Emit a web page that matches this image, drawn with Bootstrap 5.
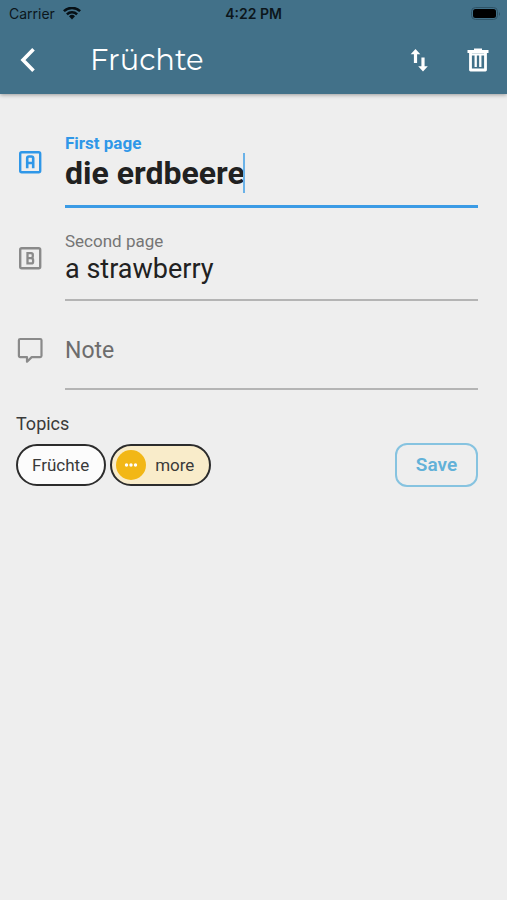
<!DOCTYPE html>
<html lang="en">
<head>
<meta charset="utf-8">
<meta name="viewport" content="width=device-width, initial-scale=1">
<title>Früchte</title>
<link href="https://cdn.jsdelivr.net/npm/bootstrap@5.3.0/dist/css/bootstrap.min.css" rel="stylesheet">
<style>
body { background: #eee; color: #212121; font-family: Roboto, "Liberation Sans", sans-serif; }
.app-top { background: #427189; box-shadow: 0 1px 4px rgba(0,0,0,.35); }
.status { height: 28px; padding: 0 6px 0 9px; font: 400 14px/28px Inter, sans-serif; color: #0c161b; }
.status .time { font-weight: 600; }
.toolbar { height: 66px; padding: 0 16px 2px 15px; }
.toolbar h1 { font: 400 29px/36px Montserrat, Inter, sans-serif; margin-left: 49px; color: #fff; }
.tool { border: 0; background: none; padding: 0; line-height: 0; color: #fff; }
.swap { margin-right: 27px; }
.entry { padding: 39px 29px 0 16px; }
.field-icon { width: 28px; color: #8a8a8a; line-height: 0; padding-bottom: 17px; }
.field-row { gap: 21px; }
.field-body { border-bottom: 2px solid #b4b4b4; }
.field-body label { font-size: 17px; line-height: 20px; color: #757575; }
.field-body input { border: 0; background: none; padding: 0; outline: 0; color: #212121; font-size: 27px; line-height: 36px; height: 36px; }
.field-body input::placeholder { color: #6c6c6c; opacity: 1; }
.active .field-icon, .active label { color: #2f97e8; }
.active .field-body { border-bottom: 3px solid #3b9be5; height: 75px; }
.active label { font-weight: 700; }
.active input { font-size: 32px; font-weight: 700; line-height: 40px; height: 40px; }
.caret { left: 178px; top: 0; width: 2px; height: 40px; background: #6ab2e8; }
.second { margin-top: 23px; }
.second .field-body { height: 70px; }
.note .field-body { height: 89px; padding-top: 32px; }
.note .field-icon { padding: 8px 0 0; }
.note input { font-size: 23px; }
.topics-title { font-size: 18px; line-height: 24px; margin: 22px 0 7px; color: #3a3a3a; }
.chip { height: 42px; border: 2px solid #2c2c2c; border-radius: 21px; background: #fcfcfc; color: #3a3a3a; font-size: 17px; line-height: 20px; padding: 0 15px 0 14px; }
.chip-more { background: #f9ecca; padding: 0 15px 0 4px; gap: 9px; }
.save { width: 83px; height: 44px; border: 2px solid #86c3e0; border-radius: 12px; background: none; color: #62b1d8; font-size: 19px; font-weight: 600; padding: 0; }
</style>
</head>
<body>
<header class="app-top">
  <div class="status d-flex align-items-center justify-content-between position-relative">
    <div class="d-flex align-items-center gap-2">
      <span>Carrier</span>
      <svg width="18" height="14" viewBox="0 0 18 14" fill="none" stroke="#071015" stroke-width="2.5" aria-hidden="true"><path d="M.9 4.200a11.600 11.600 0 0 1 16.200 0M3.900 7.300a7.300 7.300 0 0 1 10.200 0"/><path d="M6 9.300a4.300 4.300 0 0 1 6 0l-3 3.100z" fill="#071015" stroke="none"/></svg>
    </div>
    <span class="time position-absolute start-50 translate-middle-x">4:22 PM</span>
    <svg width="30" height="14" viewBox="0 0 30 14" aria-hidden="true"><rect x=".5" y=".5" width="26" height="12" rx="4" fill="none" stroke="#2e5366"/><rect x="2" y="2" width="23" height="9" rx="2.5" fill="#000"/><path d="M28 5q2 2 0 4z" fill="#2e5366"/></svg>
  </div>
  <div class="toolbar d-flex align-items-center">
    <button class="tool" type="button" aria-label="Back"><svg width="26" height="26" viewBox="0 0 26 26" fill="none" stroke="currentColor" stroke-width="3.6"><path d="M18.500 2.200L8 13l10.500 10.800"/></svg></button>
    <h1 class="mb-0 me-auto">Früchte</h1>
    <button class="tool swap" type="button" aria-label="Swap pages"><svg width="38" height="28" viewBox="0 0 38 28" fill="currentColor"><path d="M15.500 3l4.800 5.200h-3.200v8.800h-3.200V8.200h-3.200zM23 25.500l-4.800-5.200h3.200v-8.800h3.200v8.800h3.200z"/></svg></button>
    <button class="tool" type="button" aria-label="Delete"><svg width="26" height="28" viewBox="0 0 26 28" fill="none" stroke="currentColor"><path d="M2.500 5.500h21" stroke-width="3"/><path d="M9 3.700h8" stroke-width="2.400"/><path d="M5.500 6v18h15V6" stroke-width="2.800" stroke-linejoin="round"/><path d="M10.700 9v12M15.300 9v12M6 8.300h14" stroke-width="2.300"/></svg></button>
  </div>
</header>
<main>
  <form class="entry">
    <div class="field-row active d-flex align-items-center">
      <div class="field-icon"><svg width="28" height="28" viewBox="0 0 28 28" fill="none" stroke="currentColor" stroke-width="2.400" aria-hidden="true"><rect x="4.200" y="4.200" width="20" height="20" rx="1.500"/><path d="M11.200 20.300v-10q0-1.800 1.800-1.800h2.400q1.800 0 1.800 1.800v10M11.200 15h6" stroke-width="2.600"/></svg></div>
      <div class="field-body flex-grow-1">
        <label class="d-block" for="first">First page</label>
        <div class="position-relative"><input class="w-100 d-block" id="first" type="text" value="die erdbeere"><span class="caret position-absolute"></span></div>
      </div>
    </div>
    <div class="field-row second d-flex align-items-center">
      <div class="field-icon"><svg width="28" height="28" viewBox="0 0 28 28" fill="none" stroke="currentColor" stroke-width="2.400" aria-hidden="true"><rect x="4.200" y="4.200" width="20" height="20" rx="1.500"/><path d="M11.500 9.100h3.700q1.600 0 1.600 1.600v1.600q0 1.800-1.800 1.800 2.100 0 2.100 1.900v1.700q0 1.700-1.700 1.700h-3.900zM11.500 14.100h3.500" stroke-width="2.300"/></svg></div>
      <div class="field-body flex-grow-1">
        <label class="d-block" for="second">Second page</label>
        <input class="w-100 d-block" id="second" type="text" value="a strawberry">
      </div>
    </div>
    <div class="field-row note d-flex align-items-center">
      <div class="field-icon"><svg width="28" height="28" viewBox="0 0 28 28" fill="none" stroke="currentColor" stroke-width="2.200" stroke-linejoin="round" aria-hidden="true"><path d="M4.200 3h20q1.300 0 1.300 1.300v15.500q0 1.300-1.300 1.300h-8.500l-4.700 4.600v-4.600H4.200q-1.300 0-1.300-1.300V4.300Q2.900 3 4.200 3z"/></svg></div>
      <div class="field-body flex-grow-1">
        <input class="w-100 d-block" id="note" type="text" placeholder="Note" aria-label="Note">
      </div>
    </div>
    <h2 class="topics-title fw-normal">Topics</h2>
    <div class="d-flex align-items-center">
      <button class="chip me-1" type="button">Früchte</button>
      <button class="chip chip-more d-flex align-items-center" type="button">
        <svg width="30" height="30" viewBox="0 0 30 30" aria-hidden="true"><circle cx="15" cy="15" r="15" fill="#f2b716"/><g fill="#fff"><circle cx="10.500" cy="15" r="1.700"/><circle cx="15" cy="15" r="1.700"/><circle cx="19.500" cy="15" r="1.700"/></g></svg>
        more
      </button>
      <button class="save ms-auto" type="submit">Save</button>
    </div>
  </form>
</main>
<script src="https://cdn.jsdelivr.net/npm/bootstrap@5.3.0/dist/js/bootstrap.bundle.min.js"></script>
</body>
</html>
